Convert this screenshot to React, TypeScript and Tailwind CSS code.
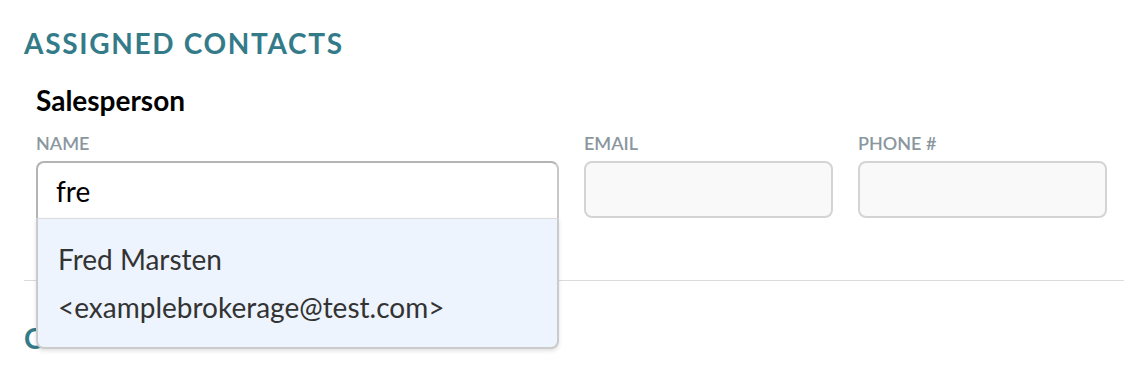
import React from "react";

const Field = ({ label, className = "" }: { label: string; className?: string }) => {
  return (
    <div className={"flex flex-col " + className}>
      <label className="text-[18px] leading-[22px] font-semibold text-[#8b979f] mb-[7px]">{label}</label>
      <div className="h-[57px] rounded-[8px] border-2 border-[#d4d4d4] bg-[#f9f9f9]" />
    </div>
  );
};

const App = () => {
  return (
    <div className="w-[1124px] h-[368px] overflow-hidden bg-white font-['Lato',sans-serif]">
      <div className="pl-[24px] pt-[26px]">
        <h2 className="text-[28px] leading-[34px] font-bold tracking-[0.06em] text-[#347b8a]">
          ASSIGNED CONTACTS
        </h2>

        <div className="pl-[12px] pr-[17px] mt-[23px]">
          <h3 className="text-[28px] leading-[34px] font-bold text-black">Salesperson</h3>

          <div className="mt-[15px] grid grid-cols-[523px_249px_249px] gap-x-[25px]">
            <div className="flex flex-col relative z-10">
              <label className="text-[18px] leading-[22px] font-semibold text-[#8b979f] mb-[7px]">NAME</label>
              <div className="relative">
                <div className="h-[57px] rounded-t-[8px] border-2 border-b-0 border-[#b4b4b4] border-r-[#c8c8c8] bg-white flex items-center pl-[18px] text-[28px] text-black">
                  fre
                </div>
                {/* suggestion list */}
                <div className="absolute left-0 right-0 top-full border-2 border-t border-[#cbcbcb] border-t-[#dcdcdc] bg-[#edf4fe] rounded-b-[8px] shadow-[0_2px_4px_rgba(0,0,0,0.12)] pt-[16px] pb-[16px] pl-[20px]">
                  <div className="text-[28px] leading-[48px] text-[#333333]">Fred Marsten</div>
                  <div className="text-[28px] leading-[48px] text-[#333333]">&lt;examplebrokerage@test.com&gt;</div>
                </div>
              </div>
            </div>
            <Field label="EMAIL" />
            <Field label="PHONE #" />
          </div>
        </div>

        <div className="mt-[62px] h-px bg-[#d8dcde]" />

        <h2 className="mt-[40px] text-[28px] leading-[34px] font-bold tracking-[0.06em] text-[#347b8a]">
          COMMISSION
        </h2>
      </div>
    </div>
  );
};

export default App;
